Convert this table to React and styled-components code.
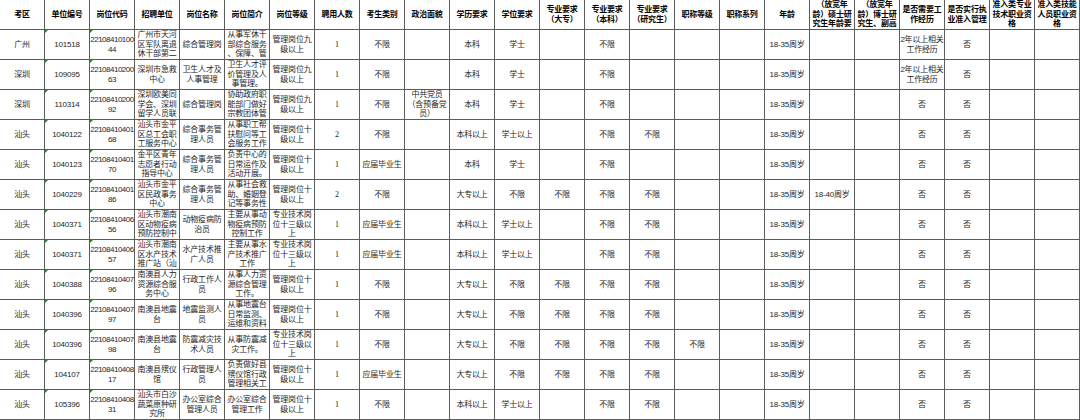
import React from "react";
import styled, { createGlobalStyle, css } from "styled-components";

const GlobalStyle = createGlobalStyle`
  html, body { margin: 0; padding: 0; background: #ffffff; }
  body { font-family: "Liberation Sans", "Noto Sans CJK SC", sans-serif; }
`;

const Sheet = styled.div`
  display: grid;
  grid-template-columns: repeat(24, 45px);
  grid-auto-rows: 30px;
  width: 1080px;
  background: #fff;
`;

const Cell = styled.div`
  position: relative;
  display: flex;
  align-items: safe center;
  justify-content: center;
  overflow: hidden;
  box-sizing: border-box;
  border-right: 1px solid #5c5c5c;
  border-bottom: 1px solid #5c5c5c;
  font-size: 8px;
  line-height: 9.6px;
  letter-spacing: -0.2px;
  text-align: center;
  white-space: pre-line;
  text-spacing-trim: space-all;
  color: #262626;
  font-family: ${(p) =>
    p.$serif
      ? `"Liberation Serif", "Noto Sans CJK SC", serif`
      : `"Liberation Sans", "Noto Sans CJK SC", sans-serif`};
  ${(p) =>
    p.$loose &&
    css`
      line-break: anywhere;
    `}
  ${(p) =>
    p.$flag &&
    css`
      &::before {
        content: "";
        position: absolute;
        top: 0;
        left: 0;
        border-top: 3px solid #1f8a1f;
        border-right: 3px solid transparent;
      }
    `}
`;

const HeadCell = styled(Cell)`
  color: #000;
  font-weight: 700;
`;

const CodeCell = styled(Cell)`
  white-space: pre;
  letter-spacing: -0.5px;
`;

const Text = styled.span`
  display: block;
  width: 100%;
`;

const headers = [
  "考区", "单位编号", "岗位代码", "招聘单位", "岗位名称", "岗位简介", "岗位等级",
  "聘用人数", "考生类别", "政治面貌", "学历要求", "学位要求",
  "专业要求\n（大专）", "专业要求\n（本科）", "专业要求\n（研究生）",
  "职称等级", "职称系列", "年龄",
  "（放宽年龄）硕士研究生年龄要求", "（放宽年龄）博士研究生、副高职称年龄要求",
  "是否需要工作经历", "是否实行执业准入管理", "准入类专业技术职业资格", "准入类技能人员职业资格",
];

const rows = [
  ["广州", "101518", "2210841010044", "广州市天河区军队离退休干部第二休养所", "综合管理岗", { t: "从事军休干部综合服务、保障、管理工作", loose: true }, "管理岗位九级以上", "1", "不限", "", "本科", "学士", "", "不限", "", "", "", "18-35周岁", "", "", "2年以上相关工作经历", "否", "", ""],
  ["深圳", "109095", "2210841020063", "深圳市急救中心", "卫生人才及人事管理", "卫生人才评价管理及人事管理。", "管理岗位九级以上", "1", "不限", "", "本科", "学士", "", "不限", "", "", "", "18-35周岁", "", "", "2年以上相关工作经历", "否", "", ""],
  ["深圳", "110314", "2210841020092", "深圳欧美同学会、深圳留学人员联谊会", "综合管理岗", "协助政府职能部门做好宗教团体管理工作", "管理岗位九级以上", "1", "不限", "中共党员（含预备党员）", "本科", "学士", "", "不限", "", "", "", "18-35周岁", "", "", "否", "否", "", ""],
  ["汕头", "1040122", "2210841040168", "汕头市金平区总工会职工服务中心", "综合事务管理人员", "从事职工帮扶慰问等工会服务工作", "管理岗位十级以上", "2", "不限", "", "本科以上", "学士以上", "", "不限", "不限", "", "", "18-35周岁", "", "", "否", "否", "", ""],
  ["汕头", "1040123", "2210841040170", "金平区青年志愿者行动指导中心", "综合事务管理人员", "负责中心的日常运作及活动开展。", "管理岗位十级以上", "1", "应届毕业生", "", "本科", "学士", "", "不限", "", "", "", "18-35周岁", "", "", "否", "否", "", ""],
  ["汕头", "1040229", "2210841040186", "汕头市金平区民政事务中心", "综合事务管理人员", "从事社会救助、婚姻登记等事务性工作", "管理岗位十级以上", "2", "不限", "", "大专以上", "不限", "不限", "不限", "不限", "", "", "18-35周岁", "18-40周岁", "", "否", "否", "", ""],
  ["汕头", "1040371", "2210841040656", "汕头市潮南区动物疫病预防控制中心", "动物疫病防治员", "主要从事动物疫病预防控制工作", "专业技术岗位十三级以上", "1", "应届毕业生", "", "本科以上", "学士以上", "", "不限", "不限", "", "", "18-35周岁", "", "", "否", "否", "", ""],
  ["汕头", "1040371", "2210841040657", "汕头市潮南区水产技术推广站（汕头市潮南区渔政大队）", "水产技术推广人员", "主要从事水产技术推广工作", "专业技术岗位十三级以上", "1", "应届毕业生", "", "本科以上", "学士以上", "", "不限", "不限", "", "", "18-35周岁", "", "", "否", "否", "", ""],
  ["汕头", "1040388", "2210841040796", "南澳县人力资源综合服务中心", "行政工作人员", "从事人力资源综合管理工作。", "管理岗位十级以上", "1", "不限", "", "大专以上", "不限", "不限", "不限", "不限", "", "", "18-35周岁", "", "", "否", "否", "", ""],
  ["汕头", "1040396", "2210841040797", "南澳县地震台", "地震监测人员", "从事地震台日常监测、运维和资料分析工作", "管理岗位十级以上", "1", "不限", "", "大专以上", "不限", "不限", "不限", "不限", "", "", "18-35周岁", "", "", "否", "否", "", ""],
  ["汕头", "1040396", "2210841040798", "南澳县地震台", "防震减灾技术人员", "从事防震减灾工作。", "专业技术岗位十三级以上", "1", "不限", "", "大专以上", "不限", "不限", "不限", "不限", "不限", "", "18-35周岁", "", "", "否", "否", "", ""],
  ["汕头", "104107", "2210841040817", "南澳县殡仪馆", "行政管理人员", "负责做好县殡仪馆行政管理相关工作", "管理岗位十级以上", "1", "应届毕业生", "", "大专以上", "不限", "不限", "不限", "不限", "", "", "18-35周岁", "", "", "否", "否", "", ""],
  ["汕头", "105396", "2210841040831", "汕头市白沙蔬菜原种研究所", "办公室综合管理人员", "办公室综合管理工作", "管理岗位十级以上", "1", "不限", "", "本科以上", "学士以上", "", "不限", "不限", "", "", "18-35周岁", "", "", "否", "否", "", ""],
];

function DataCell({ value, col }) {
  const item = typeof value === "object" ? value : { t: value };
  if (col === 2) {
    return (
      <CodeCell $flag>
        <Text>{`${item.t.slice(0, 11)}\n${item.t.slice(11)}`}</Text>
      </CodeCell>
    );
  }
  return (
    <Cell $flag={col === 1} $serif={col === 7} $loose={item.loose}>
      <Text>{item.t}</Text>
    </Cell>
  );
}

export default function App() {
  return (
    <>
      <GlobalStyle />
      <Sheet>
        {headers.map((h, i) => (
          <HeadCell key={`h${i}`}>
            <Text>{h}</Text>
          </HeadCell>
        ))}
        {rows.map((row, r) =>
          row.map((v, c) => <DataCell key={`${r}-${c}`} value={v} col={c} />)
        )}
      </Sheet>
    </>
  );
}
